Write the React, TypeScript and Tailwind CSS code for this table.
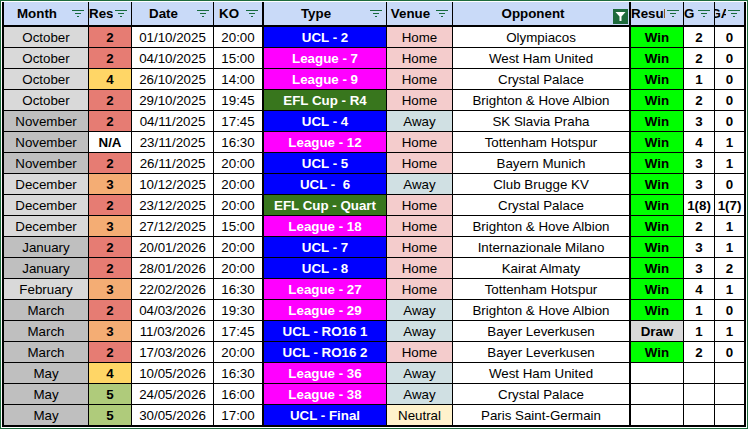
import React from "react";

type Row = {
  m: string;
  r: string;
  d: string;
  ko: string;
  t: string;
  v: string;
  o: string;
  res?: string;
  g?: string;
  ga?: string;
};

const rows: Row[] = [
  { m: "October", r: "2", d: "01/10/2025", ko: "20:00", t: "UCL - 2", v: "Home", o: "Olympiacos", res: "Win", g: "2", ga: "0" },
  { m: "October", r: "2", d: "04/10/2025", ko: "15:00", t: "League - 7", v: "Home", o: "West Ham United", res: "Win", g: "2", ga: "0" },
  { m: "October", r: "4", d: "26/10/2025", ko: "14:00", t: "League - 9", v: "Home", o: "Crystal Palace", res: "Win", g: "1", ga: "0" },
  { m: "October", r: "2", d: "29/10/2025", ko: "19:45", t: "EFL Cup - R4", v: "Home", o: "Brighton & Hove Albion", res: "Win", g: "2", ga: "0" },
  { m: "November", r: "2", d: "04/11/2025", ko: "17:45", t: "UCL - 4", v: "Away", o: "SK Slavia Praha", res: "Win", g: "3", ga: "0" },
  { m: "November", r: "N/A", d: "23/11/2025", ko: "16:30", t: "League - 12", v: "Home", o: "Tottenham Hotspur", res: "Win", g: "4", ga: "1" },
  { m: "November", r: "2", d: "26/11/2025", ko: "20:00", t: "UCL - 5", v: "Home", o: "Bayern Munich", res: "Win", g: "3", ga: "1" },
  { m: "December", r: "3", d: "10/12/2025", ko: "20:00", t: "UCL -  6", v: "Away", o: "Club Brugge KV", res: "Win", g: "3", ga: "0" },
  { m: "December", r: "2", d: "23/12/2025", ko: "20:00", t: "EFL Cup - Quart", v: "Home", o: "Crystal Palace", res: "Win", g: "1(8)", ga: "1(7)" },
  { m: "December", r: "3", d: "27/12/2025", ko: "15:00", t: "League - 18", v: "Home", o: "Brighton & Hove Albion", res: "Win", g: "2", ga: "1" },
  { m: "January", r: "2", d: "20/01/2026", ko: "20:00", t: "UCL - 7", v: "Home", o: "Internazionale Milano", res: "Win", g: "3", ga: "1" },
  { m: "January", r: "2", d: "28/01/2026", ko: "20:00", t: "UCL - 8", v: "Home", o: "Kairat Almaty", res: "Win", g: "3", ga: "2" },
  { m: "February", r: "3", d: "22/02/2026", ko: "16:30", t: "League - 27", v: "Home", o: "Tottenham Hotspur", res: "Win", g: "4", ga: "1" },
  { m: "March", r: "2", d: "04/03/2026", ko: "19:30", t: "League - 29", v: "Away", o: "Brighton & Hove Albion", res: "Win", g: "1", ga: "0" },
  { m: "March", r: "3", d: "11/03/2026", ko: "17:45", t: "UCL - RO16 1", v: "Away", o: "Bayer Leverkusen", res: "Draw", g: "1", ga: "1" },
  { m: "March", r: "2", d: "17/03/2026", ko: "20:00", t: "UCL - RO16 2", v: "Home", o: "Bayer Leverkusen", res: "Win", g: "2", ga: "0" },
  { m: "May", r: "4", d: "10/05/2026", ko: "16:30", t: "League - 36", v: "Away", o: "West Ham United" },
  { m: "May", r: "5", d: "24/05/2026", ko: "16:00", t: "League - 38", v: "Away", o: "Crystal Palace" },
  { m: "May", r: "5", d: "30/05/2026", ko: "17:00", t: "UCL - Final", v: "Neutral", o: "Paris Saint-Germain" },
];

const monthBg: Record<string, string> = {
  October: "bg-[#d9d9d9]",
  November: "bg-[#bfbfbf]",
  December: "bg-[#d9d9d9]",
  January: "bg-[#bfbfbf]",
  February: "bg-[#d9d9d9]",
  March: "bg-[#bfbfbf]",
  May: "bg-[#bfbfbf]",
};

const resBg: Record<string, string> = {
  "2": "bg-[#e67c73]",
  "3": "bg-[#f4ad74]",
  "4": "bg-[#ffd666]",
  "5": "bg-[#afcb7b]",
  "N/A": "bg-white",
};

function typeBg(t: string) {
  if (t.startsWith("UCL")) return "bg-[#0000ff]";
  if (t.startsWith("League")) return "bg-[#ff00ff]";
  return "bg-[#38761d]";
}

const venueBg: Record<string, string> = {
  Home: "bg-[#f4cccc]",
  Away: "bg-[#d0e0e3]",
  Neutral: "bg-[#fff2cc]",
};

function resultBg(r?: string) {
  if (r === "Win") return "bg-[#00ff00]";
  if (r === "Draw") return "bg-[#d9d9d9]";
  return "bg-white";
}

const GRID = "grid grid-cols-[85px_43px_82px_50px_123px_66px_178px_53px_31px_29px]";

function FilterIcon() {
  return (
    <svg width="12" height="7" viewBox="0 0 12 7" className="shrink-0">
      <rect x="0" y="0" width="12" height="1" fill="#166b3e" />
      <rect x="3" y="3" width="6" height="1" fill="#166b3e" />
      <rect x="5" y="6" width="2" height="1" fill="#166b3e" />
    </svg>
  );
}

function ActiveFilter() {
  return (
    <div className="w-[15px] h-[15px] bg-[#1e6b3c] flex items-center justify-center shrink-0 self-end mb-[1px] mr-[1px]">
      <svg width="11" height="11" viewBox="0 0 11 11">
        <path d="M0.5 1 H10.5 L6.5 5.5 V10 H4.5 V5.5 Z" fill="#ffffff" />
      </svg>
    </div>
  );
}

function HeaderCell({
  label,
  align = "center",
  border = "border-r",
  active = false,
}: {
  label: string;
  align?: "center" | "left";
  border?: string;
  active?: boolean;
}) {
  return (
    <div className={`flex items-center h-full bg-[#c9daf8] border-black ${border} overflow-hidden`}>
      <div
        className={`flex-1 min-w-0 h-full flex items-center overflow-hidden whitespace-nowrap ${
          align === "center" ? "justify-center" : "justify-start"
        }`}
      >
        <span className="font-bold shrink-0">{label}</span>
      </div>
      {active ? (
        <ActiveFilter />
      ) : (
        <div className="ml-[2px] mr-[4px] flex items-center">
          <FilterIcon />
        </div>
      )}
    </div>
  );
}

function Cell({
  children,
  className = "",
}: {
  children?: React.ReactNode;
  className?: string;
}) {
  return (
    <div
      className={`h-full flex items-center justify-center pt-[2px] whitespace-pre overflow-hidden border-black ${className}`}
    >
      {children}
    </div>
  );
}

export default function App() {
  return (
    <div
      className="w-[748px] h-[429px] border border-[#1d6b3c] p-px bg-white text-black text-[13.33px] leading-none"
      style={{ fontFamily: '"Liberation Sans", Arial, sans-serif' }}
    >
      <div className="border-l-2 border-r-2 border-b border-black">
        <div className={`${GRID} h-[25px] border-b-2 border-black`}>
          <HeaderCell label="Month" />
          <HeaderCell label="Res" align="left" />
          <HeaderCell label="Date" />
          <HeaderCell label="KO" border="border-r-2" />
          <HeaderCell label="Type" />
          <HeaderCell label="Venue" />
          <HeaderCell label="Opponent" border="border-r-2" active />
          <HeaderCell label="Result" align="left" />
          <HeaderCell label="G" align="left" />
          <HeaderCell label="GA" border="" />
        </div>
        {rows.map((row, i) => (
          <div key={i} className={`${GRID} h-[21px] border-b border-black`}>
            <Cell className={`border-r ${monthBg[row.m]}`}>{row.m}</Cell>
            <Cell className={`border-r font-bold ${resBg[row.r]}`}>{row.r}</Cell>
            <Cell className="border-r bg-white">{row.d}</Cell>
            <Cell className="border-r-2 bg-white">{row.ko}</Cell>
            <Cell className={`border-r font-bold text-white ${typeBg(row.t)}`}>{row.t}</Cell>
            <Cell className={`border-r ${venueBg[row.v]}`}>{row.v}</Cell>
            <Cell className="border-r-2 bg-white">{row.o}</Cell>
            <Cell className={`border-r font-bold ${resultBg(row.res)}`}>{row.res}</Cell>
            <Cell className="border-r font-bold bg-white">{row.g}</Cell>
            <Cell className="font-bold bg-white">{row.ga}</Cell>
          </div>
        ))}
      </div>
    </div>
  );
}
